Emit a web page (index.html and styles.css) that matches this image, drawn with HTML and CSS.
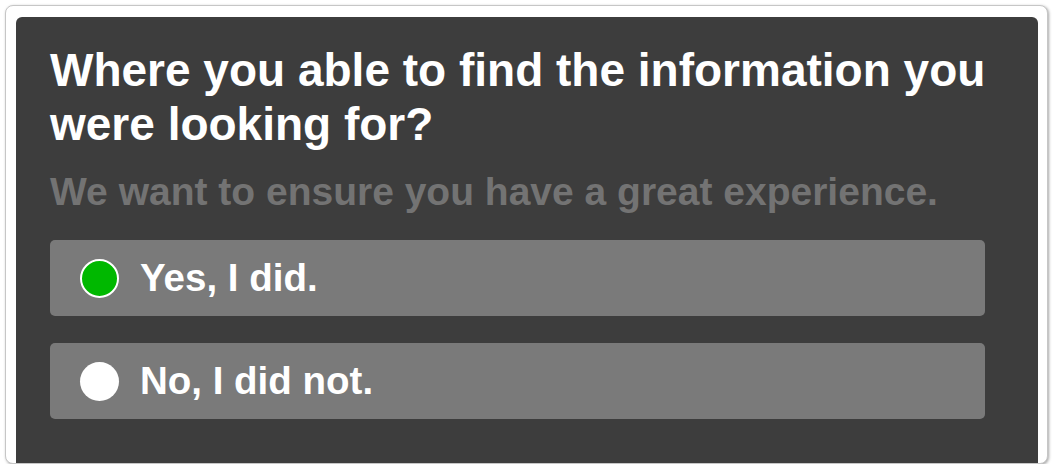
FILE: index.html
```html
<!doctype html>
<html lang="en">
<head>
    <meta charset="UTF-8">
    <meta name="viewport" content="width=device-width, initial-scale=1.0">
    <title>Feedback</title>
    <link rel="stylesheet" href="styles.css">
</head>
<body>
<div class="frame">
    <div class="panel">
        <h1 class="question">Where you able to find the information you were looking for?</h1>
        <p class="hint">We want to ensure you have a great experience.</p>
        <ul class="options">
            <li class="option selected"><span class="dot"></span>Yes, I did.</li>
            <li class="option"><span class="dot"></span>No, I did not.</li>
        </ul>
    </div>
</div>
</body>
</html>
```

FILE: styles.css
```css
*{margin: 0;padding: 0;box-sizing: border-box}
body{background: #fff;font-family: "Liberation Sans", Arial, Helvetica, sans-serif;}
.frame{
    margin: 5px 0 0 5px;
    width: 1043px;
    height: 459px;
    padding: 11px 9px 0 10px;
    border: 1px solid #c6c6c6;
    border-radius: 8px;
    box-shadow: 1px 1px 3px rgba(0,0,0,.35);
    background: #fff;
    overflow: hidden;
}
.panel{
    height: 100%;
    background: #3d3d3d;
    border-radius: 6px 6px 0 0;
    padding: 26px 36px 0 34px;
}
.question{
    color: #fff;
    font-size: 46px;
    line-height: 54px;
    font-weight: bold;
}
.hint{
    margin-top: 19px;
    color: #737373;
    font-size: 39px;
    line-height: 44px;
    font-weight: bold;
}
.options{list-style: none;margin: 26px 17px 0 0;display: flex;flex-direction: column;gap: 27px}
.option{
    height: 76px;
    display: flex;
    align-items: center;
    gap: 21px;
    padding-left: 30px;
    background: #7a7a7a;
    border-radius: 5px;
    color: #fff;
    font-size: 38.5px;
    font-weight: bold;
}
.dot{width: 39px;height: 39px;border-radius: 50%;background: #fff;flex: none}
.selected .dot{background: #00b800;border: 2px solid #fff}
```
